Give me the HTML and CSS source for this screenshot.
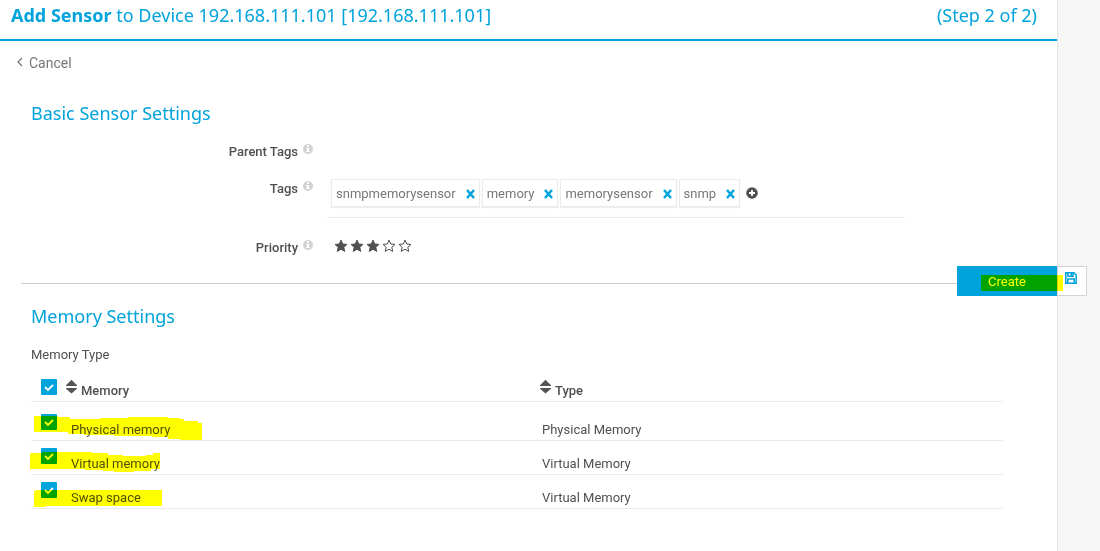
FILE: index.html
```html
<!DOCTYPE html>
<html lang="en">
<head>
  <meta charset="utf-8">
  <title>Add Sensor</title>
  <link rel="stylesheet" href="styles.css">
</head>
<body>

  <svg class="sprite" aria-hidden="true">
    <symbol id="info" viewBox="0 0 10 10">
      <circle cx="5" cy="5" r="5" fill="#d0d2d3" />
      <path d="M4 1h2v2H4zM3 4h3v3h1v1H3V7h1V5H3z" fill="#fff" />
    </symbol>
    <symbol id="remove" viewBox="0 0 9 10">
      <path d="M1 1l7 8M8 1L1 9" fill="none" stroke="#00a3db" stroke-width="2.5" />
    </symbol>
    <symbol id="star" viewBox="0 0 14 14">
      <path d="M7 1.100l1.700 3.900 4.300.4-3.200 2.800.9 4.200L7 10.200l-3.700 2.200.9-4.200L1 5.400 5.300 5z" />
    </symbol>
    <symbol id="sort" viewBox="0 0 12 16">
      <path d="M6 0l6 6v1H0V6zM0 9h12v1l-6 5-6-5z" fill="#555" />
    </symbol>
  </svg>

  <div class="page">
    <main>
      <header>
        <h1><b>Add Sensor</b> to Device 192.168.111.101 [192.168.111.101]</h1>
        <span class="step">(Step 2 of 2)</span>
      </header>

      <a href="#" class="cancel">
        <svg width="6" height="10" viewBox="0 0 6 10"><path d="M5 1L1 5l4 4" fill="none" stroke="#777" stroke-width="1.3" /></svg>
        Cancel
      </a>

      <form>
        <section class="basic">
          <h2>Basic Sensor Settings</h2>

          <div class="form-row">
            <div class="label"><span>Parent Tags</span><svg class="info"><use href="#info" /></svg></div>
          </div>

          <div class="form-row tags-row">
            <div class="label"><span>Tags</span><svg class="info"><use href="#info" /></svg></div>
            <div class="tags">
              <span class="tag">snmpmemorysensor <button type="button" aria-label="Remove snmpmemorysensor"><svg><use href="#remove" /></svg></button></span>
              <span class="tag">memory <button type="button" aria-label="Remove memory"><svg><use href="#remove" /></svg></button></span>
              <span class="tag">memorysensor <button type="button" aria-label="Remove memorysensor"><svg><use href="#remove" /></svg></button></span>
              <span class="tag">snmp <button type="button" aria-label="Remove snmp"><svg><use href="#remove" /></svg></button></span>
              <button type="button" class="add" aria-label="Add tag">
                <svg width="12" height="12" viewBox="0 0 12 12"><circle cx="6" cy="6" r="5.8" fill="#505050" /><path d="M6 3v6M3 6h6" stroke="#fff" stroke-width="1.8" /></svg>
              </button>
            </div>
          </div>

          <div class="form-row priority-row">
            <div class="label"><span>Priority</span><svg class="info"><use href="#info" /></svg></div>
            <div class="stars" role="radiogroup" aria-label="Priority">
              <label class="star on"><input type="radio" name="priority" value="1" aria-label="1"><svg><use href="#star" /></svg></label>
              <label class="star on"><input type="radio" name="priority" value="2" aria-label="2"><svg><use href="#star" /></svg></label>
              <label class="star on"><input type="radio" name="priority" value="3" aria-label="3" checked><svg><use href="#star" /></svg></label>
              <label class="star"><input type="radio" name="priority" value="4" aria-label="4"><svg><use href="#star" /></svg></label>
              <label class="star"><input type="radio" name="priority" value="5" aria-label="5"><svg><use href="#star" /></svg></label>
            </div>
          </div>
        </section>

        <div class="create-row">
          <hr>
          <button type="submit" class="create">
            <span class="create-text">Create</span>
            <span class="create-icon">
              <svg width="12" height="12" viewBox="0 0 12 12" fill="none" stroke="#00a3db" stroke-width="1.5"><path d="M.8.8h8.200l2.200 2.200v8.200H.8z" /><path d="M3 .8v3.400h5V.8M6.300 1v2.500M2.800 11V7h6.400v4" /></svg>
            </span>
            <svg class="mark mark-create" viewBox="0 0 82 16"><path d="M0 0h82v16H0z" /></svg>
          </button>
        </div>

        <section class="memory">
          <h2>Memory Settings</h2>
          <p>Memory Type</p>

          <table>
            <thead>
              <tr>
                <th class="check"><input type="checkbox" aria-label="Select all" checked></th>
                <th class="name"><svg class="sort"><use href="#sort" /></svg>Memory</th>
                <th><svg class="sort"><use href="#sort" /></svg>Type</th>
              </tr>
            </thead>
            <tbody>
              <tr>
                <td class="check">
                  <input type="checkbox" id="physical" checked>
                  <svg class="mark mark-row" viewBox="0 0 180 30"><path d="M4 4h24v1h12v2h30V6h28V5h40v1h12v1h4v2h14v2h4v17h-22v-1h-12v-2h-16v-1H84v-1H54v-1H38v-2H4z" /></svg>
                </td>
                <td class="name"><label for="physical">Physical memory</label></td>
                <td>Physical Memory</td>
              </tr>
              <tr>
                <td class="check">
                  <input type="checkbox" id="virtual" checked>
                  <svg class="mark mark-row" viewBox="0 0 180 30"><path d="M0 7h12V6h50v1h16v2h15v1h23V9h7V7h7v16h-9v2h-17v1H84v-1H73v-1H55v-1H0z" /></svg>
                </td>
                <td class="name"><label for="virtual">Virtual memory</label></td>
                <td>Virtual Memory</td>
              </tr>
              <tr>
                <td class="check">
                  <input type="checkbox" id="swap" checked>
                  <svg class="mark mark-row" viewBox="0 0 180 30"><path d="M6 10h126v16H16v1H4V11h2z" /></svg>
                </td>
                <td class="name"><label for="swap">Swap space</label></td>
                <td>Virtual Memory</td>
              </tr>
            </tbody>
          </table>
        </section>
      </form>
    </main>
    <aside></aside>
  </div>

</body>
</html>
```

FILE: styles.css
```css
* {
  box-sizing: border-box;
}

body {
  margin: 0;
  font-family: Roboto, Arial, sans-serif;
  font-size: 13px;
  line-height: 16px;
  color: #505050;
  background: #fff;
}

.sprite {
  display: none;
}

svg {
  display: block;
}

button {
  padding: 0;
  border: none;
  background: none;
  font: inherit;
  cursor: pointer;
}

.page {
  display: flex;
  min-height: 100vh;
}

main {
  flex: 1;
}

aside {
  width: 43px;
  background: #f6f6f6;
  border-left: 1px solid #e2e2e2;
}

header {
  display: flex;
  justify-content: space-between;
  padding: 3px 20px 12px 11px;
  border-bottom: 2px solid #00a3db;
}

h1,
h2,
.step {
  margin: 0;
  font-family: "Noto Sans", sans-serif;
  font-size: 18px;
  font-weight: normal;
  line-height: 24px;
  color: #00a3db;
}

.cancel {
  display: inline-flex;
  align-items: center;
  gap: 6px;
  margin: 14px 0 0 17px;
  font-size: 14px;
  color: #777;
  text-decoration: none;
}

.cancel svg {
  margin-bottom: 3px;
}

.basic {
  padding: 30px 31px 0;
}

.form-row {
  display: grid;
  grid-template-columns: 282px minmax(0, 578px);
  column-gap: 14px;
}

.label {
  display: flex;
  justify-content: flex-end;
  gap: 5px;
  padding-top: 19px;
  font-weight: 500;
}

.info {
  width: 10px;
  height: 10px;
}

.tags-row {
  padding-top: 3px;
}

.tags-row .label {
  padding-top: 18px;
}

.priority-row .label {
  padding-top: 22px;
}

.tags {
  display: flex;
  gap: 2px;
  margin-top: 16px;
  padding: 0 4px 10px;
  border-bottom: 1px solid #ebebeb;
}

.tag {
  display: flex;
  align-items: center;
  gap: 10px;
  height: 28px;
  padding: 2px 4px 0;
  color: #777;
  border: 1px solid #ebebeb;
  box-shadow: 0 1px 1px #eee;
}

.tag svg {
  width: 9px;
  height: 10px;
}

.add {
  margin-left: 4px;
}

.stars {
  display: flex;
  gap: 2px;
  padding: 21px 0 0 7px;
}

.star {
  position: relative;
  cursor: pointer;
}

.star input {
  position: absolute;
  opacity: 0;
  margin: 0;
}

.star svg {
  width: 14px;
  height: 14px;
  fill: none;
  stroke: #505050;
}

.star.on svg {
  fill: #505050;
}

.create-row {
  display: flex;
  align-items: center;
  margin: 10px -30px 0 21px;
}

hr {
  flex: 1;
  margin: 4px 0 0;
  border: none;
  border-top: 1px solid #ccc;
}

.create {
  position: relative;
  display: flex;
  height: 30px;
  isolation: isolate;
}

.create-text {
  width: 100px;
  line-height: 32px;
  height: 30px;
  color: #fff;
  background: #00a3db;
}

.create-icon {
  width: 30px;
  height: 30px;
  padding: 5px 7px;
  background: #fff;
  border: 1px solid #d4d4d4;
}

/* yellow marker strokes */
.mark {
  position: absolute;
  fill: #ff0;
  mix-blend-mode: multiply;
  pointer-events: none;
}

.mark-create {
  top: 9px;
  left: 24px;
  width: 82px;
  height: 16px;
}

.mark-row {
  bottom: -2px;
  left: -1px;
  width: 180px;
  height: 30px;
}

.memory {
  padding: 8px 54px 0 31px;
}

.memory p {
  margin: 19px 0 11px;
}

table {
  width: 100%;
  table-layout: fixed;
  border-collapse: separate;
  border-spacing: 0;
}

th,
td {
  height: 34px;
  padding: 0 0 2px 2px;
  text-align: left;
  vertical-align: bottom;
  border-bottom: 1px solid #ebebeb;
}

th {
  height: 28px;
  padding-left: 0;
  font-weight: 500;
}

tbody tr:first-child td {
  height: 39px;
}

th.check,
td.check {
  position: relative;
  width: 35px;
  padding: 0 0 10px 10px;
}

th.check {
  padding-bottom: 6px;
}

th.name {
  width: 474px;
}

td.name {
  padding-left: 5px;
}

.sort {
  display: inline-block;
  width: 11px;
  height: 16px;
  margin-right: 4px;
  vertical-align: 0;
}

input[type="checkbox"] {
  display: block;
  appearance: none;
  width: 16px;
  height: 16px;
  margin: 0;
  border-radius: 1px;
  background: #00a3db;
}

input[type="checkbox"]:checked {
  background-image: url("data:image/svg+xml,%3Csvg xmlns='http://www.w3.org/2000/svg' viewBox='0 0 16 16'%3E%3Cpath d='M4 8l3 3 5-5' fill='none' stroke='white' stroke-width='1.8'/%3E%3C/svg%3E");
}
```
